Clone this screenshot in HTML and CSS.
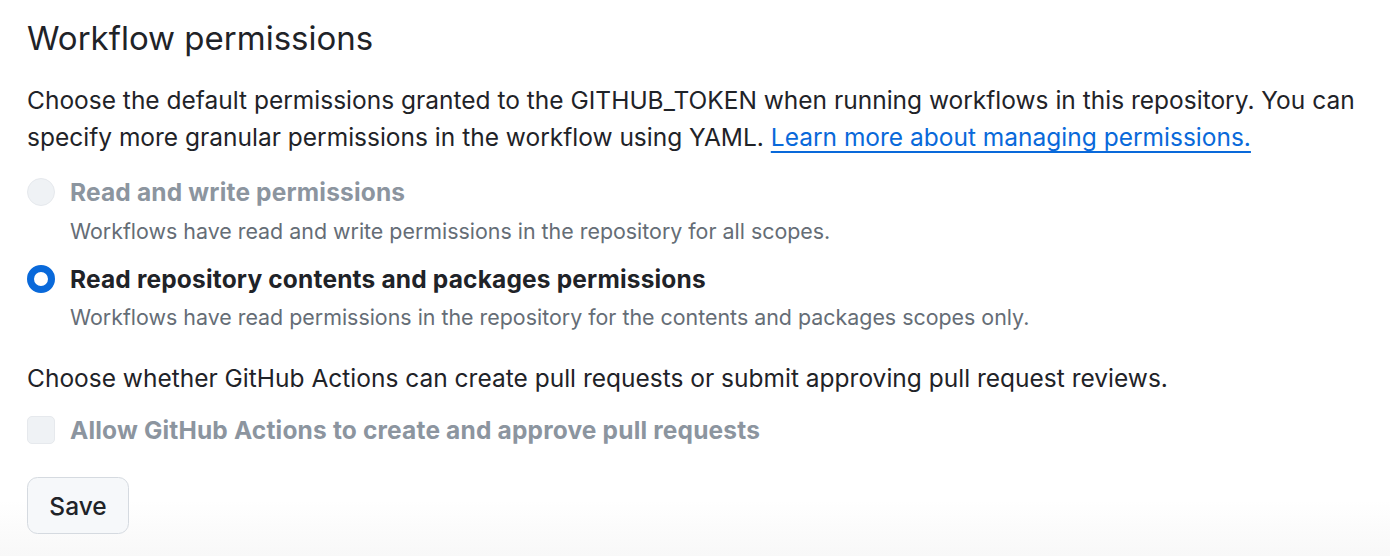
FILE: index.html
```html
<!DOCTYPE html>
<html lang="en">
<head>
<meta charset="utf-8">
<title>Workflow permissions</title>
<link rel="stylesheet" href="styles.css">
</head>
<body>
<main class="page">
  <h2 class="heading">Workflow permissions</h2>
  <p class="lead">Choose the default permissions granted to the GITHUB_TOKEN when running workflows in this repository. You can specify more granular permissions in the workflow using YAML. <a class="link" href="#">Learn more about managing permissions.</a></p>

  <div class="option option-first">
    <span class="radio radio-disabled"></span>
    <div class="option-text">
      <div class="label label-disabled">Read and write permissions</div>
      <div class="note">Workflows have read and write permissions in the repository for all scopes.</div>
    </div>
  </div>

  <div class="option option-second">
    <span class="radio radio-checked"></span>
    <div class="option-text">
      <div class="label">Read repository contents and packages permissions</div>
      <div class="note">Workflows have read permissions in the repository for the contents and packages scopes only.</div>
    </div>
  </div>

  <p class="lead lead-second">Choose whether GitHub Actions can create pull requests or submit approving pull request reviews.</p>

  <div class="option option-check">
    <span class="checkbox checkbox-disabled"></span>
    <div class="option-text">
      <div class="label label-disabled">Allow GitHub Actions to create and approve pull requests</div>
    </div>
  </div>

  <button class="btn" type="button">Save</button>
</main>
</body>
</html>
```

FILE: styles.css
```css
html {
  height: 556px;
  background: linear-gradient(to bottom, #ffffff 0px, #ffffff 500px, #f8f8f8 556px);
}
body {
  margin: 0;
  font-family: Inter, "Noto Sans", "Liberation Sans", sans-serif;
  color: #1f2328;
}
.page {
  padding: 17px 0 0 27px;
  width: 1340px;
}
.heading {
  margin: 0;
  font-size: 33px;
  line-height: 43.75px;
  font-weight: 400;
}
.lead {
  margin: 21px 0 0 0;
  font-size: 24.5px;
  line-height: 36.75px;
}
.lead-second {
  margin-top: 26.5px;
}
.link {
  color: #0969da;
  text-decoration: underline;
  text-underline-offset: 5px;
  text-decoration-thickness: 2px;
  text-decoration-skip-ink: none;
}
.option {
  display: flex;
  align-items: flex-start;
  gap: 15px;
}
.option-first { margin-top: 18.5px; }
.option-second { margin-top: 13.6px; }
.option-check { margin-top: 14.5px; }
.radio {
  flex: none;
  width: 28px;
  height: 28px;
  border-radius: 50%;
  box-sizing: border-box;
  margin-top: 4.3px;
}
.radio-disabled {
  background: #eff2f5;
  border: 1.75px solid #e6e9ed;
}
.radio-checked {
  background: #ffffff;
  border: 7px solid #0969da;
}
.checkbox {
  flex: none;
  width: 28px;
  height: 28px;
  border-radius: 5px;
  box-sizing: border-box;
  margin-top: 4.8px;
}
.checkbox-disabled {
  background: #eff2f5;
  border: 1.75px solid #e6e9ed;
}
.label {
  font-size: 24.5px;
  line-height: 36.75px;
  font-weight: 700;
  letter-spacing: 0.17px;
  color: #1f2328;
}
.label-disabled {
  color: #8c959f;
}
.note {
  margin-top: 5px;
  font-size: 21.4px;
  line-height: 31.5px;
  color: #656d76;
}
.btn {
  display: block;
  margin-top: 29px;
  width: 102px;
  height: 57px;
  padding: 0;
  font-family: inherit;
  font-size: 24.5px;
  font-weight: 500;
  color: #1f2328;
  background: #f6f8fa;
  border: 1.75px solid #d5dae0;
  border-radius: 10.5px;
}
```
